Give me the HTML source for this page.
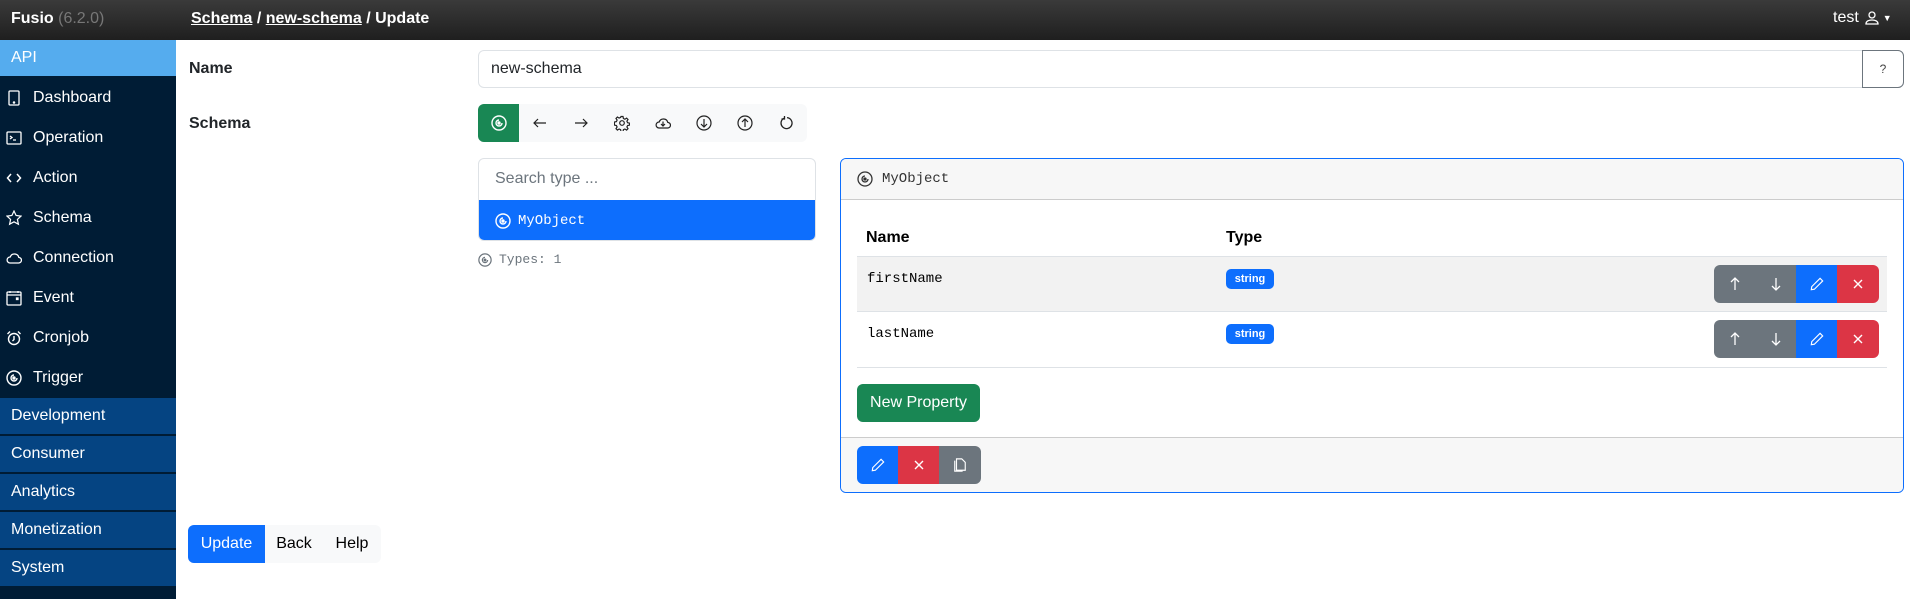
<!DOCTYPE html>
<html><head><meta charset="utf-8"><style>
*{box-sizing:border-box;margin:0;padding:0}
body{width:1910px;height:599px;overflow:hidden;font-family:"Liberation Sans",sans-serif;font-size:16px;color:#212529;background:#fff;position:relative}
.abs{position:absolute}
.top{left:0;top:0;width:1910px;height:40px;background:linear-gradient(#3a3a3a,#1f1f1f)}
.side{left:0;top:40px;width:176px;height:559px;background:#001c35}
.nav{position:absolute;left:0;width:176px;height:40px;color:#fff;font-size:16px;display:flex;align-items:center}
.nav svg{margin:0 11px 0 6px}
.cat{position:absolute;left:0;width:176px;height:36px;background:#054482;color:#fff;padding-left:11px;line-height:36px}
.mono{font-family:"Liberation Mono",monospace}
.btn{position:absolute;display:flex;align-items:center;justify-content:center;color:#fff}
svg{display:block}
</style></head><body>
<div class="abs top"></div>
<div class="abs" style="left:11px;top:10px;color:#fff;font-weight:bold;font-size:16px">Fusio <span style="color:#777;font-weight:normal">(6.2.0)</span></div>
<div class="abs" style="left:191px;top:10px;color:#fff;font-weight:bold;font-size:16px"><u>Schema</u> / <u>new-schema</u> / Update</div>
<div class="abs" style="left:1833px;top:9px;color:#fff;font-size:16px;display:flex;align-items:center">test <svg width="16" height="16" viewBox="0 0 16 16" style="margin-left:5px"><circle cx="8" cy="5" r="3" fill="none" stroke="#fff" stroke-width="1.3"/><path d="M2 14c0-3 3-4 6-4s6 1 6 4z" fill="none" stroke="#fff" stroke-width="1.3"/></svg><span style="font-size:9px;margin-left:3px">▼</span></div>

<div class="abs side"></div>
<div class="abs" style="left:0;top:40px;width:176px;height:36px;background:#55acee;color:#fff;padding-left:11px;line-height:36px">API</div>
<div class="nav" style="top:78px"><svg width="16" height="16" viewBox="0 0 16 16" fill="none" stroke="#fff" stroke-width="1.3"><rect x="3" y="1" width="10" height="14" rx="1"/><circle cx="8" cy="12.5" r=".6" fill="#fff"/></svg>Dashboard</div>
<div class="nav" style="top:118px"><svg width="16" height="16" viewBox="0 0 16 16" fill="none" stroke="#fff" stroke-width="1.3"><rect x="1" y="2" width="14" height="12" rx="1"/><path d="M4 6l2 1.5L4 9M7 10h3"/></svg>Operation</div>
<div class="nav" style="top:158px"><svg width="16" height="16" viewBox="0 0 16 16" fill="none" stroke="#fff" stroke-width="1.5"><path d="M5 4L1.5 8 5 12M11 4l3.5 4L11 12"/></svg>Action</div>
<div class="nav" style="top:198px"><svg width="16" height="16" viewBox="0 0 16 16" fill="none" stroke="#fff" stroke-width="1.2"><path d="M8 1l2.1 4.5 4.9.6-3.6 3.3 1 4.8L8 11.8 3.6 14.2l1-4.8L1 6.1l4.9-.6z"/></svg>Schema</div>
<div class="nav" style="top:238px"><svg width="16" height="16" viewBox="0 0 16 16" fill="none" stroke="#fff" stroke-width="1.3"><path d="M4 13h8.5a2.8 2.8 0 0 0 .3-5.6A4.5 4.5 0 0 0 4.2 7 3 3 0 0 0 4 13z"/></svg>Connection</div>
<div class="nav" style="top:278px"><svg width="16" height="16" viewBox="0 0 16 16" fill="none" stroke="#fff" stroke-width="1.3"><rect x="1" y="2" width="14" height="13" rx="1"/><path d="M1 5h14M4 1v2M12 1v2"/><rect x="10.5" y="8" width="1.5" height="1.5" fill="#fff"/></svg>Event</div>
<div class="nav" style="top:318px"><svg width="16" height="16" viewBox="0 0 16 16" fill="none" stroke="#fff" stroke-width="1.4"><circle cx="8" cy="9" r="5.5"/><path d="M8 6v3.5L6.5 11M1.5 4L4 1.5M14.5 4L12 1.5"/></svg>Cronjob</div>
<div class="nav" style="top:358px"><svg width="16" height="16" viewBox="0 0 16 16" fill="none" stroke="#fff" stroke-width="1.4"><circle cx="8" cy="8" r="7"/><path d="M11 8a3 3 0 1 1-3-3"/><circle cx="8" cy="8" r="1" fill="#fff"/></svg>Trigger</div>
<div class="cat" style="top:398px">Development</div>
<div class="cat" style="top:436px">Consumer</div>
<div class="cat" style="top:474px">Analytics</div>
<div class="cat" style="top:512px">Monetization</div>
<div class="cat" style="top:550px">System</div>

<div class="abs" style="left:189px;top:60px;font-weight:bold">Name</div>
<div class="abs" style="left:189px;top:115px;font-weight:bold">Schema</div>
<div class="abs" style="left:478px;top:50px;width:1426px;height:38px;border:1px solid #dee2e6;border-radius:6px;padding:0 12px;line-height:36px">new-schema</div>
<div class="abs" style="left:1862px;top:50px;width:42px;height:38px;border:1px solid #6c757d;border-radius:0 6px 6px 0;background:#fff;text-align:center;line-height:36px;font-size:12px;color:#444">?</div>

<div class="abs" style="left:478px;top:104px;width:329px;height:38px;background:#f8f9fa;border-radius:6px"></div>
<div class="btn" style="left:478px;top:104px;width:41px;height:38px;background:#198754;border-radius:6px 0 0 6px"><svg width="16" height="16" viewBox="0 0 16 16" fill="none" stroke="#fff" stroke-width="1.4"><circle cx="8" cy="8" r="7"/><path d="M11 8a3 3 0 1 1-3-3"/><circle cx="8" cy="8" r="1" fill="#fff"/></svg></div>
<div class="abs" style="left:519px;top:104px;display:flex;height:38px;align-items:center">
<svg style="margin-left:13px" width="16" height="16" viewBox="0 0 16 16" fill="none" stroke="#222" stroke-width="1.2"><path d="M14 8H2M6 4L2 8l4 4"/></svg>
<svg style="margin-left:25px" width="16" height="16" viewBox="0 0 16 16" fill="none" stroke="#222" stroke-width="1.2"><path d="M2 8h12M10 4l4 4-4 4"/></svg>
<svg style="margin-left:25px" width="16" height="16" viewBox="0 0 16 16" fill="none" stroke="#222" stroke-width="1.2"><circle cx="8" cy="8" r="2.3"/><path d="M7 1.5h2l.4 2 1.5.7 1.7-1.1 1.4 1.4-1.1 1.7.7 1.5 2 .4v2l-2 .4-.7 1.5 1.1 1.7-1.4 1.4-1.7-1.1-1.5.7-.4 2H7l-.4-2-1.5-.7-1.7 1.1-1.4-1.4 1.1-1.7-.7-1.5-2-.4V7l2-.4.7-1.5-1.1-1.7 1.4-1.4 1.7 1.1 1.5-.7z"/></svg>
<svg style="margin-left:25px" width="16" height="16" viewBox="0 0 16 16" fill="none" stroke="#222" stroke-width="1.2"><path d="M4 13h8.5a2.8 2.8 0 0 0 .3-5.6A4.5 4.5 0 0 0 4.2 7 3 3 0 0 0 4 13z"/><path d="M8 6.5v4.5M6 9l2 2 2-2"/></svg>
<svg style="margin-left:25px" width="16" height="16" viewBox="0 0 16 16" fill="none" stroke="#222" stroke-width="1.2"><circle cx="8" cy="8" r="7"/><path d="M8 4v8M5 9l3 3 3-3"/></svg>
<svg style="margin-left:25px" width="16" height="16" viewBox="0 0 16 16" fill="none" stroke="#222" stroke-width="1.2"><circle cx="8" cy="8" r="7"/><path d="M8 12V4M5 7l3-3 3 3"/></svg>
<svg style="margin-left:25px" width="16" height="16" viewBox="0 0 16 16" fill="none" stroke="#222" stroke-width="1.3"><path d="M6 3.2A5.5 5.5 0 1 0 9 2.6"/><path d="M6.5 1v3h-3"/></svg>
</div>

<div class="abs" style="left:478px;top:158px;width:338px;height:83px;border:1px solid #dee2e6;border-radius:6px;overflow:hidden">
<div style="height:41px;padding-left:16px;line-height:40px;color:#6c757d">Search type ...</div>
<div class="mono" style="height:42px;background:#0d6efd;color:#fff;font-size:14px;display:flex;align-items:center;padding-left:16px"><svg width="16" height="16" viewBox="0 0 16 16" fill="none" stroke="#fff" stroke-width="1.4" style="margin-right:7px"><circle cx="8" cy="8" r="7"/><path d="M11 8a3 3 0 1 1-3-3"/><circle cx="8" cy="8" r="1" fill="#fff"/></svg>MyObject</div>
</div>
<div class="abs mono" style="left:478px;top:252px;font-size:13px;color:#6c757d;display:flex;align-items:center"><svg width="14" height="14" viewBox="0 0 16 16" fill="none" stroke="#6c757d" stroke-width="1.4" style="margin-right:7px"><circle cx="8" cy="8" r="7"/><path d="M11 8a3 3 0 1 1-3-3"/><circle cx="8" cy="8" r="1" fill="#6c757d"/></svg>Types: 1</div>

<div class="abs" style="left:840px;top:158px;width:1064px;height:335px;border:1px solid #0d6efd;border-radius:6px;overflow:hidden">
<div class="mono" style="height:41px;background:#f7f7f7;border-bottom:1px solid #ccc;display:flex;align-items:center;padding-left:16px;font-size:14px;color:#333"><svg width="16" height="16" viewBox="0 0 16 16" fill="none" stroke="#333" stroke-width="1.3" style="margin-right:9px"><circle cx="8" cy="8" r="7"/><path d="M11 8a3 3 0 1 1-3-3"/><circle cx="8" cy="8" r="1" fill="#333"/></svg>MyObject</div>
<div style="position:absolute;left:16px;top:70px;font-weight:bold;font-size:16px;color:#000;padding-left:9px">Name</div>
<div style="position:absolute;left:385px;top:70px;font-weight:bold;font-size:16px;color:#000">Type</div>
<div style="position:absolute;left:16px;top:97px;width:1030px;height:56px;background:#f2f2f2;border-top:1px solid #dee2e6;border-bottom:1px solid #dee2e6"></div>
<div style="position:absolute;left:16px;top:208px;width:1030px;border-top:1px solid #dee2e6"></div>
<div class="mono" style="position:absolute;left:26px;top:112px;font-size:14px;color:#000">firstName</div>
<div class="mono" style="position:absolute;left:26px;top:167px;font-size:14px;color:#000">lastName</div>
<div style="position:absolute;left:385px;top:110px;width:48px;height:20px;background:#0d6efd;border-radius:5px;color:#fff;font-size:11px;font-weight:bold;text-align:center;line-height:20px">string</div>
<div style="position:absolute;left:385px;top:165px;width:48px;height:20px;background:#0d6efd;border-radius:5px;color:#fff;font-size:11px;font-weight:bold;text-align:center;line-height:20px">string</div>
<div style="position:absolute;left:16px;top:225px;width:123px;height:38px;background:#198754;border-radius:6px;color:#fff;text-align:center;line-height:38px">New Property</div>
<div style="position:absolute;left:0;top:278px;width:1064px;height:57px;background:#f7f7f7;border-top:1px solid #ccc"></div>
</div>

<!-- row buttons -->
<div class="abs" style="left:1714px;top:265px;display:flex;border-radius:6px;overflow:hidden">
<div class="btn" style="position:static;width:41px;height:38px;background:#6c757d"><svg width="14" height="16" viewBox="0 0 14 16" fill="none" stroke="#fff" stroke-width="1.3"><path d="M7 14V2M3 6l4-4 4 4"/></svg></div>
<div class="btn" style="position:static;width:41px;height:38px;background:#6c757d"><svg width="14" height="16" viewBox="0 0 14 16" fill="none" stroke="#fff" stroke-width="1.3"><path d="M7 2v12M3 10l4 4 4-4"/></svg></div>
<div class="btn" style="position:static;width:41px;height:38px;background:#0d6efd"><svg width="14" height="14" viewBox="0 0 16 16" fill="none" stroke="#fff" stroke-width="1.3"><path d="M11.5 1.5l3 3L5 14l-3.5.5L2 11z"/></svg></div>
<div class="btn" style="position:static;width:42px;height:38px;background:#dc3545"><svg width="12" height="12" viewBox="0 0 12 12" stroke="#fff" stroke-width="1.4"><path d="M2 2l8 8M10 2l-8 8"/></svg></div>
</div>
<div class="abs" style="left:1714px;top:320px;display:flex;border-radius:6px;overflow:hidden">
<div class="btn" style="position:static;width:41px;height:38px;background:#6c757d"><svg width="14" height="16" viewBox="0 0 14 16" fill="none" stroke="#fff" stroke-width="1.3"><path d="M7 14V2M3 6l4-4 4 4"/></svg></div>
<div class="btn" style="position:static;width:41px;height:38px;background:#6c757d"><svg width="14" height="16" viewBox="0 0 14 16" fill="none" stroke="#fff" stroke-width="1.3"><path d="M7 2v12M3 10l4 4 4-4"/></svg></div>
<div class="btn" style="position:static;width:41px;height:38px;background:#0d6efd"><svg width="14" height="14" viewBox="0 0 16 16" fill="none" stroke="#fff" stroke-width="1.3"><path d="M11.5 1.5l3 3L5 14l-3.5.5L2 11z"/></svg></div>
<div class="btn" style="position:static;width:42px;height:38px;background:#dc3545"><svg width="12" height="12" viewBox="0 0 12 12" stroke="#fff" stroke-width="1.4"><path d="M2 2l8 8M10 2l-8 8"/></svg></div>
</div>
<div class="abs" style="left:857px;top:446px;display:flex;border-radius:6px;overflow:hidden">
<div class="btn" style="position:static;width:41px;height:38px;background:#0d6efd"><svg width="14" height="14" viewBox="0 0 16 16" fill="none" stroke="#fff" stroke-width="1.3"><path d="M11.5 1.5l3 3L5 14l-3.5.5L2 11z"/></svg></div>
<div class="btn" style="position:static;width:41px;height:38px;background:#dc3545"><svg width="12" height="12" viewBox="0 0 12 12" stroke="#fff" stroke-width="1.4"><path d="M2 2l8 8M10 2l-8 8"/></svg></div>
<div class="btn" style="position:static;width:42px;height:38px;background:#6c757d"><svg width="14" height="14" viewBox="0 0 16 16" fill="none" stroke="#fff" stroke-width="1.3"><path d="M4 1h6l4 4v9H4z"/><path d="M2 3v12h9"/></svg></div>
</div>

<div class="abs" style="left:188px;top:525px;display:flex;height:38px;border-radius:6px;overflow:hidden;background:#f8f9fa">
<div style="width:77px;background:#0d6efd;color:#fff;text-align:center;line-height:38px">Update</div>
<div style="width:58px;text-align:center;line-height:38px;color:#000">Back</div>
<div style="width:58px;text-align:center;line-height:38px;color:#000">Help</div>
</div>
</body></html>
